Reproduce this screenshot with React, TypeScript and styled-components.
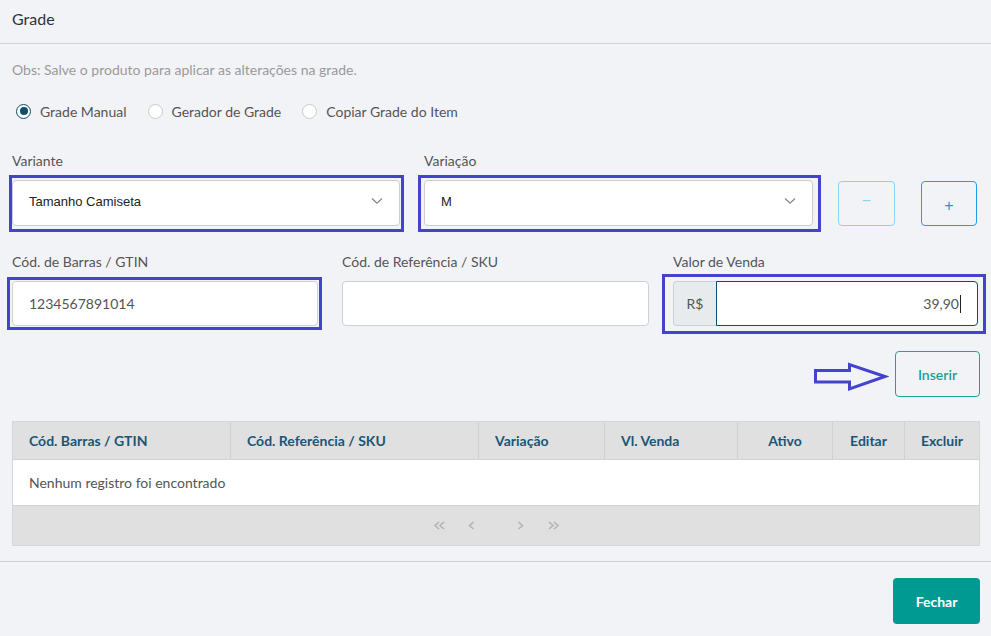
import React from 'react';
import styled, { createGlobalStyle } from 'styled-components';

const GlobalStyle = createGlobalStyle`
  html, body {
    margin: 0;
    padding: 0;
    background: #f2f3f7;
    font-family: Lato, "Noto Sans", sans-serif;
  }
`;

const Page = styled.div`
  width: 991px;
  height: 636px;
  background: #f2f3f7;
  display: flex;
  flex-direction: column;
  overflow: hidden;
`;

const Header = styled.div`
  height: 44px;
  border-bottom: 1px solid #cfd1d6;
  display: flex;
  align-items: center;
  padding: 0 12px 7px;
  font-size: 16px;
  color: #333;
  box-sizing: border-box;
`;

const Body = styled.div`
  padding: 0 13px 0 12px;
  display: flex;
  flex-direction: column;
`;

const Note = styled.div`
  margin-top: 17px;
  line-height: 18px;
  font-size: 14px;
  color: #9a9a9a;
`;

const Radios = styled.div`
  margin-top: 23px;
  display: flex;
  align-items: center;
  gap: 21px;
  height: 18px;
  padding-left: 4px;
`;

const RadioOption = styled.label`
  display: flex;
  align-items: center;
  gap: 9px;
  font-size: 14px;
  color: #555;
`;

const RadioCircle = styled.span<{ $checked?: boolean }>`
  width: 15px;
  height: 15px;
  border-radius: 50%;
  box-sizing: border-box;
  background: #fff;
  border: ${p => (p.$checked ? '1.5px solid #0e4d6b' : '1px solid #c9c9c9')};
  display: flex;
  align-items: center;
  justify-content: center;
  &::after {
    content: '';
    display: ${p => (p.$checked ? 'block' : 'none')};
    width: 8px;
    height: 8px;
    border-radius: 50%;
    background: #0e4d6b;
  }
`;

const TopRow = styled.div`
  margin-top: 32px;
  display: flex;
  align-items: flex-end;
`;

const FieldRow = styled.div`
  margin-top: 27px;
  display: grid;
  grid-template-columns: 306px 307px 305px;
  column-gap: 24px;
`;

const Field = styled.div<{ $width?: number; $gap?: number }>`
  display: flex;
  flex-direction: column;
  width: ${p => (p.$width ? `${p.$width}px` : 'auto')};
  margin-left: ${p => p.$gap || 0}px;
`;

const Label = styled.div`
  font-size: 14px;
  line-height: 18px;
  color: #555;
  margin-bottom: 10px;
`;

const Highlight = styled.div<{ $t: number; $r: number; $b: number; $l: number }>`
  position: relative;
  &::after {
    content: '';
    position: absolute;
    top: -${p => p.$t}px;
    right: -${p => p.$r}px;
    bottom: -${p => p.$b}px;
    left: -${p => p.$l}px;
    border: 3px solid #4343cc;
    pointer-events: none;
  }
`;

const Select = styled.div`
  height: 46px;
  box-sizing: border-box;
  background: #fff;
  border: 1px solid #cdcdcd;
  border-radius: 4px;
  display: flex;
  align-items: center;
  justify-content: space-between;
  padding: 0 16px 4px 16px;
  font-family: "Liberation Sans", Arial, sans-serif;
  font-size: 13px;
  color: #222;
`;

const Input = styled.div<{ $align?: string; $focus?: boolean }>`
  height: 45px;
  box-sizing: border-box;
  background: #fff;
  border: 1px solid ${p => (p.$focus ? '#0e4d6b' : '#d0d0d0')};
  border-radius: ${p => (p.$focus ? '0 4px 4px 0' : '4px')};
  display: flex;
  align-items: center;
  justify-content: ${p => (p.$align === 'right' ? 'flex-end' : 'flex-start')};
  padding: 0 16px;
  font-size: 14px;
  color: #555;
  flex: 1;
`;

const Caret = styled.span`
  display: inline-block;
  width: 1px;
  height: 18px;
  background: #222;
  margin-left: 1px;
`;

const Group = styled.div`
  display: flex;
`;

const Addon = styled.div`
  width: 43px;
  height: 45px;
  box-sizing: border-box;
  background: #e8ebee;
  border: 1px solid #d0d0d0;
  border-right: none;
  border-radius: 4px 0 0 4px;
  display: flex;
  align-items: center;
  justify-content: center;
  font-size: 14px;
  color: #555;
`;

const SquareButton = styled.button<{ $faded?: boolean; $width: number; $gap: number }>`
  width: ${p => p.$width}px;
  height: 45px;
  margin-left: ${p => p.$gap}px;
  box-sizing: border-box;
  background: transparent;
  border: 1px solid ${p => (p.$faded ? '#8fd0f5' : '#1aa0e8')};
  border-radius: 4px;
  color: ${p => (p.$faded ? '#8fd0f5' : '#1a9be0')};
  font-size: 16px;
  font-family: "Liberation Sans", Arial, sans-serif;
  display: flex;
  align-items: center;
  justify-content: center;
  padding: ${p => (p.$faded ? '0 0 6px' : '4px 0 0')};
`;

const ActionRow = styled.div`
  margin-top: 25px;
  margin-right: -2px;
  display: flex;
  justify-content: flex-end;
  align-items: flex-start;
  gap: 6px;
  & > svg { margin-top: 9px; }
`;

const OutlineButton = styled.button`
  width: 85px;
  height: 46px;
  box-sizing: border-box;
  background: transparent;
  border: 1px solid #1ca49c;
  border-radius: 4px;
  color: #1a9d96;
  font-family: Lato, sans-serif;
  font-size: 14px;
  font-weight: 600;
`;

const Table = styled.div`
  margin-top: 24px;
  margin-right: -2px;
  border: 1px solid #d6d6d6;
  display: flex;
  flex-direction: column;
`;

const HeadRow = styled.div`
  display: grid;
  grid-template-columns: 217px 248px 126px 133px 95px 72px 1fr;
  height: 37px;
  background: #e0e0e0;
  border-bottom: 1px solid #d2d2d2;
`;

const HeadCell = styled.div<{ $center?: boolean }>`
  display: flex;
  align-items: center;
  justify-content: ${p => (p.$center ? 'center' : 'flex-start')};
  padding: 0 ${p => (p.$center ? 0 : 16)}px;
  font-size: 14px;
  font-weight: 700;
  color: #1b5576;
  border-left: 1px solid #d0d0d0;
  &:first-child { border-left: none; }
`;

const EmptyRow = styled.div`
  height: 45px;
  background: #fff;
  border-bottom: 1px solid #d2d2d2;
  display: flex;
  align-items: center;
  padding: 0 16px;
  font-size: 14px;
  color: #555;
`;

const Pager = styled.div`
  height: 39px;
  background: #e0e0e0;
  display: flex;
  align-items: center;
  justify-content: center;
  padding-left: 1px;
`;

const PagerIcon = styled.svg<{ $gap?: number }>`
  margin-left: ${p => p.$gap || 0}px;
  display: block;
`;

const Footer = styled.div`
  margin-top: 15px;
  border-top: 1px solid #cfd1d6;
  padding: 16px 11px 0 12px;
  display: flex;
  justify-content: flex-end;
`;

const PrimaryButton = styled.button`
  width: 87px;
  height: 46px;
  background: #009a93;
  border: none;
  border-radius: 4px;
  color: #fff;
  font-family: Lato, sans-serif;
  font-size: 14px;
  font-weight: 700;
`;

const Chevron = () => (
  <svg width="12" height="8" viewBox="0 0 12 8">
    <path d="M1 1.5 L6 6.2 L11 1.5" fill="none" stroke="#888" strokeWidth="1.3" />
  </svg>
);

const Arrow = () => (
  <svg width="77" height="34" viewBox="0 0 77 34">
    <path
      d="M3.5 10.5 L37.5 10.5 L37.5 4.5 L73 16.5 L37.5 29 L37.5 22 L3.5 22 Z"
      fill="none"
      stroke="#4343cc"
      strokeWidth="3"
    />
  </svg>
);

const pagerPaths: Record<string, { w: number; d: string }> = {
  first: { w: 12, d: 'M6 1 L2 4.5 L6 8 M11 1 L7 4.5 L11 8' },
  prev: { w: 7, d: 'M5.5 1 L1.5 4.5 L5.5 8' },
  next: { w: 7, d: 'M1.5 1 L5.5 4.5 L1.5 8' },
  last: { w: 12, d: 'M1 1 L5 4.5 L1 8 M6 1 L10 4.5 L6 8' },
};

const PagerButton: React.FC<{ kind: string; gap?: number }> = ({ kind, gap }) => {
  const icon = pagerPaths[kind];
  return (
    <PagerIcon $gap={gap} width={icon.w} height="9" viewBox={`0 0 ${icon.w} 9`}>
      <path d={icon.d} fill="none" stroke="#b3b3b3" strokeWidth="1.6" />
    </PagerIcon>
  );
};

const columns = [
  { title: 'Cód. Barras / GTIN' },
  { title: 'Cód. Referência / SKU' },
  { title: 'Variação' },
  { title: 'Vl. Venda' },
  { title: 'Ativo', center: true },
  { title: 'Editar', center: true },
  { title: 'Excluir', center: true },
];

const App: React.FC = () => {
  return (
    <Page>
      <GlobalStyle />
      <Header>Grade</Header>
      <Body>
        <Note>Obs: Salve o produto para aplicar as alterações na grade.</Note>
        <Radios>
          <RadioOption><RadioCircle $checked />Grade Manual</RadioOption>
          <RadioOption><RadioCircle />Gerador de Grade</RadioOption>
          <RadioOption><RadioCircle />Copiar Grade do Item</RadioOption>
        </Radios>

        <TopRow>
          <Field $width={388}>
            <Label>Variante</Label>
            <Highlight $t={5} $r={4} $b={6} $l={3}>
              <Select>
                Tamanho Camiseta
                <Chevron />
              </Select>
            </Highlight>
          </Field>
          <Field $width={389} $gap={24}>
            <Label>Variação</Label>
            <Highlight $t={5} $r={8} $b={6} $l={6}>
              <Select>
                M
                <Chevron />
              </Select>
            </Highlight>
          </Field>
          <SquareButton $faded $width={57} $gap={25}>−</SquareButton>
          <SquareButton $width={56} $gap={26}>+</SquareButton>
        </TopRow>

        <FieldRow>
          <Field>
            <Label>Cód. de Barras / GTIN</Label>
            <Highlight $t={4} $r={4} $b={4} $l={5}>
              <Input>1234567891014</Input>
            </Highlight>
          </Field>
          <Field>
            <Label>Cód. de Referência / SKU</Label>
            <Input />
          </Field>
          <Field>
            <Label>Valor de Venda</Label>
            <Highlight $t={7} $r={8} $b={8} $l={11}>
              <Group>
                <Addon>R$</Addon>
                <Input $align="right" $focus>39,90<Caret /></Input>
              </Group>
            </Highlight>
          </Field>
        </FieldRow>

        <ActionRow>
          <Arrow />
          <OutlineButton>Inserir</OutlineButton>
        </ActionRow>

        <Table>
          <HeadRow>
            {columns.map(c => (
              <HeadCell key={c.title} $center={c.center}>{c.title}</HeadCell>
            ))}
          </HeadRow>
          <EmptyRow>Nenhum registro foi encontrado</EmptyRow>
          <Pager>
            <PagerButton kind="first" />
            <PagerButton kind="prev" gap={23} />
            <PagerButton kind="next" gap={42} />
            <PagerButton kind="last" gap={24} />
          </Pager>
        </Table>
      </Body>
      <Footer>
        <PrimaryButton>Fechar</PrimaryButton>
      </Footer>
    </Page>
  );
};

export default App;
